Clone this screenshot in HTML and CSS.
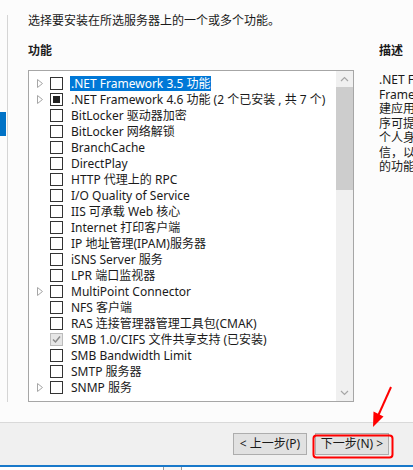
FILE: index.html
```html
<!DOCTYPE html>
<html lang="zh-CN">
<head>
<meta charset="utf-8">
<title>添加角色和功能向导</title>
<link rel="stylesheet" href="styles.css">
</head>
<body>
<div class="page">
  <div class="main">
    <div class="nav"><div class="nav-active"></div></div>
    <div class="content">
      <div class="intro">选择要安装在所选服务器上的一个或多个功能。</div>
      <div class="heading">功能</div>
      <div class="listbox">
        <div class="items">
          <div class="row"><span class="exp"><svg width="6" height="9" viewBox="0 0 6 9"><path d="M0.5 0.5 L5.5 4.5 L0.5 8.5 Z" fill="none" stroke="#a6a6a6" stroke-width="1"/></svg></span><span class="cb"></span><span class="lbl sel">.NET Framework 3.5 功能</span></div>
          <div class="row"><span class="exp"><svg width="6" height="9" viewBox="0 0 6 9"><path d="M0.5 0.5 L5.5 4.5 L0.5 8.5 Z" fill="none" stroke="#a6a6a6" stroke-width="1"/></svg></span><span class="cb ind"></span><span class="lbl">.NET Framework 4.6 功能 (2 个已安装 , 共 7 个)</span></div>
          <div class="row"><span class="exp"></span><span class="cb"></span><span class="lbl">BitLocker 驱动器加密</span></div>
          <div class="row"><span class="exp"></span><span class="cb"></span><span class="lbl">BitLocker 网络解锁</span></div>
          <div class="row"><span class="exp"></span><span class="cb"></span><span class="lbl">BranchCache</span></div>
          <div class="row"><span class="exp"></span><span class="cb"></span><span class="lbl">DirectPlay</span></div>
          <div class="row"><span class="exp"></span><span class="cb"></span><span class="lbl">HTTP 代理上的 RPC</span></div>
          <div class="row"><span class="exp"></span><span class="cb"></span><span class="lbl">I/O Quality of Service</span></div>
          <div class="row"><span class="exp"></span><span class="cb"></span><span class="lbl">IIS 可承载 Web 核心</span></div>
          <div class="row"><span class="exp"></span><span class="cb"></span><span class="lbl">Internet 打印客户端</span></div>
          <div class="row"><span class="exp"></span><span class="cb"></span><span class="lbl">IP 地址管理(IPAM)服务器</span></div>
          <div class="row"><span class="exp"></span><span class="cb"></span><span class="lbl">iSNS Server 服务</span></div>
          <div class="row"><span class="exp"></span><span class="cb"></span><span class="lbl">LPR 端口监视器</span></div>
          <div class="row"><span class="exp"><svg width="6" height="9" viewBox="0 0 6 9"><path d="M0.5 0.5 L5.5 4.5 L0.5 8.5 Z" fill="none" stroke="#a6a6a6" stroke-width="1"/></svg></span><span class="cb"></span><span class="lbl">MultiPoint Connector</span></div>
          <div class="row"><span class="exp"></span><span class="cb"></span><span class="lbl">NFS 客户端</span></div>
          <div class="row"><span class="exp"></span><span class="cb"></span><span class="lbl">RAS 连接管理器管理工具包(CMAK)</span></div>
          <div class="row"><span class="exp"></span><span class="cb dis"><svg width="11" height="11" viewBox="0 0 11 11"><path d="M2 5.5 L4.5 8 L9 2.5" fill="none" stroke="#8a8a8a" stroke-width="1.5"/></svg></span><span class="lbl">SMB 1.0/CIFS 文件共享支持 (已安装)</span></div>
          <div class="row"><span class="exp"></span><span class="cb"></span><span class="lbl">SMB Bandwidth Limit</span></div>
          <div class="row"><span class="exp"></span><span class="cb"></span><span class="lbl">SMTP 服务器</span></div>
          <div class="row"><span class="exp"><svg width="6" height="9" viewBox="0 0 6 9"><path d="M0.5 0.5 L5.5 4.5 L0.5 8.5 Z" fill="none" stroke="#a6a6a6" stroke-width="1"/></svg></span><span class="cb"></span><span class="lbl">SNMP 服务</span></div>
        </div>
        <div class="scroll">
          <div class="arrow up"><svg width="9" height="6" viewBox="0 0 9 6"><path d="M1 5 L4.5 1.5 L8 5" fill="none" stroke="#a6a6a6" stroke-width="1.2"/></svg></div>
          <div class="thumb"></div>
          <div class="track"></div>
          <div class="arrow down"><svg width="9" height="6" viewBox="0 0 9 6"><path d="M1 1 L4.5 4.5 L8 1" fill="none" stroke="#a6a6a6" stroke-width="1.2"/></svg></div>
        </div>
      </div>
    </div>
    <div class="desc">
      <div class="heading">描述</div>
      <div class="desc-text">
        <div class="dl">.NET Framework 3.5 结合了 .NET</div>
        <div class="dl">Framework 2.0 API 的功能和用于构</div>
        <div class="dl">建应用程序的新技术，这些应用程</div>
        <div class="dl">序可提供美观的用户界面，保护客户</div>
        <div class="dl">个人身份信息，实现顺畅而安全的通</div>
        <div class="dl">信，以及提供为一系列业务流程建模</div>
        <div class="dl">的功能。</div>
      </div>
    </div>
  </div>
  <div class="footer">
    <button class="btn">&lt; 上一步(P)</button>
    <button class="btn">下一步(N) &gt;</button>
  </div>
  <div class="taskbar"><div class="tab"></div></div>
  <svg class="annot" width="413" height="470" viewBox="0 0 413 470">
    <rect x="313.5" y="435.5" width="79" height="22" rx="3" fill="none" stroke="#ff0000" stroke-width="2"/>
    <line x1="391" y1="387" x2="378" y2="416" stroke="#ff0000" stroke-width="2"/>
    <polygon points="373,427 383.5,416.5 373.5,411.5" fill="#ff0000"/>
  </svg>
</div>
</body>
</html>
```

FILE: styles.css
```css
* { box-sizing: border-box; }
html, body { margin: 0; padding: 0; }
body {
  width: 413px;
  height: 470px;
  overflow: hidden;
  background: #fcfcfc;
  font-family: "Noto Sans", "Noto Sans CJK SC", sans-serif;
  font-size: 12px;
  color: #1a1a1a;
}
.page { position: relative; width: 413px; height: 470px; overflow: hidden; }
.main { display: flex; height: 422px; }
.nav {
  width: 8px;
  margin-top: 15px;
  height: 387px;
  border-right: 1px solid #d5d5d5;
  flex: none;
}
.nav-active { width: 6px; height: 24px; margin-top: 97px; background: #0072c6; }
.content { padding-left: 20px; flex: none; }
.intro { margin-top: 13px; line-height: 16px; white-space: nowrap; }
.heading { margin-top: 14px; line-height: 16px; font-weight: 700; white-space: nowrap; }
.listbox {
  margin-top: 11px;
  width: 326px;
  height: 332px;
  border: 1px solid #a6a6a6;
  background: #fff;
  display: flex;
}
.items { flex: 1; min-width: 0; padding-top: 4px; overflow: hidden; }
.row { display: flex; align-items: center; height: 16px; white-space: nowrap; }
.exp { width: 21px; flex: none; display: flex; align-items: center; padding-left: 8px; height: 16px; }
.exp svg { display: block; }
.cb {
  width: 13px; height: 13px; flex: none;
  border: 1px solid #333;
  background: #fff;
  display: flex; align-items: center; justify-content: center;
}
.cb.ind::after { content: ""; width: 7px; height: 7px; background: #222; }
.cb.dis { border-color: #bcbcbc; background: #e6e6e6; }
.cb.dis svg { display: block; }
.lbl { margin-left: 7px; padding: 0 1px; line-height: 15px; }
.lbl.sel { background: #0078d7; color: #fff; }
.scroll { width: 17px; flex: none; background: #f0f0f0; display: flex; flex-direction: column; }
.arrow { height: 16px; display: flex; align-items: center; justify-content: center; flex: none; }
.thumb { height: 103px; background: #cdcdcd; flex: none; }
.track { flex: 1; }
.desc { margin-left: 25px; flex: none; width: 34px; overflow: hidden; }
.desc .heading { margin-top: 43px; }
.desc-text { margin-top: 14px; }
.dl { line-height: 14.5px; height: 14.5px; white-space: nowrap; overflow: hidden; }
.footer {
  height: 45px;
  border-top: 1px solid #d9d9d9;
  border-bottom: 2px solid #1979ca;
  background: #f0f0f0;
  display: flex;
  justify-content: flex-end;
  align-items: flex-start;
  gap: 8px;
  padding: 10px 24px 0 0;
}
.btn {
  width: 74px; height: 22px;
  border: 1px solid #adadad;
  background: #e1e1e1;
  font-family: "Noto Sans", "Noto Sans CJK SC", sans-serif;
  font-size: 12px;
  color: #1a1a1a;
  padding: 0;
  line-height: 20px;
}
.taskbar { height: 3px; background: #fff; position: relative; }
.tab { margin-left: 163px; width: 19px; height: 3px; border-left: 1px solid #9a9a9a; border-right: 1px solid #9a9a9a; background: #f5f5f5; }
.annot { position: absolute; left: 0; top: 0; pointer-events: none; }
```
